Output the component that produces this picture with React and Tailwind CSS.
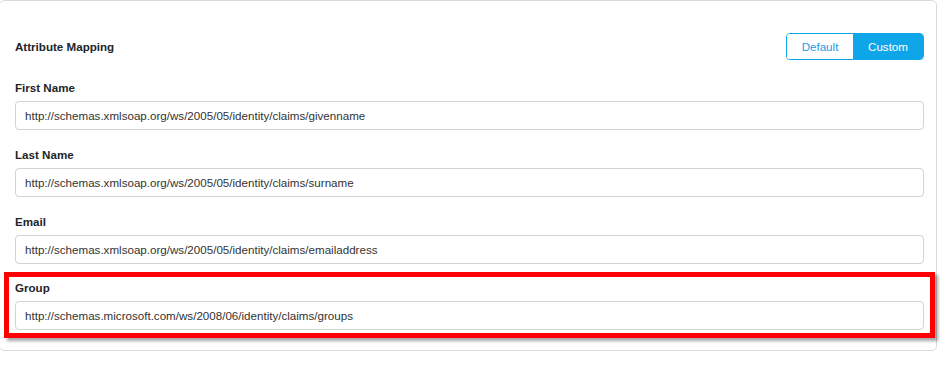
import React from "react";

const fields = [
  { label: "First Name", value: "http://schemas.xmlsoap.org/ws/2005/05/identity/claims/givenname", gap: "mt-[20px]" },
  { label: "Last Name", value: "http://schemas.xmlsoap.org/ws/2005/05/identity/claims/surname", gap: "mt-[17px]" },
  { label: "Email", value: "http://schemas.xmlsoap.org/ws/2005/05/identity/claims/emailaddress", gap: "mt-[17px]" },
  { label: "Group", value: "http://schemas.microsoft.com/ws/2008/06/identity/claims/groups", gap: "mt-[16px]" },
];

function App() {
  return (
    <div className="relative h-[373px] w-[951px] overflow-hidden bg-white font-['Liberation_Sans',Arial,sans-serif]">
      {/* card */}
      <div className="-ml-px w-[938px] rounded-[5px] border border-[#d6d9dd] bg-white pl-[15px] pr-[12px] pt-[32px] pb-[20px]">
        <div className="flex h-[27px] items-center justify-between">
          <span className="text-[11.6px] font-bold leading-4 text-[#212529]">Attribute Mapping</span>
          <div className="flex h-[27px] overflow-hidden rounded-[4px] border border-[#0ea5e9] text-[11.6px]">
            <button className="w-[66px] bg-white text-[#1d9be6]">Default</button>
            <button className="w-[70px] bg-[#0ea5e9] text-white">Custom</button>
          </div>
        </div>

        {fields.map((f) => (
          <div key={f.label} className={f.gap}>
            <div className="text-[11.6px] font-bold leading-4 text-[#212529]">{f.label}</div>
            <div className="mt-[5px] flex h-[29px] items-center rounded-[4px] border border-[#ced4da] px-[9px] text-[11.6px] text-[#333]">
              {f.value}
            </div>
          </div>
        ))}
      </div>

      {/* annotation highlight */}
      <div className="absolute left-[4px] top-[272px] h-[66px] w-[931px] border-[5px] border-[#ff0000] shadow-[3px_3px_3px_rgba(0,0,0,0.35)]" />
    </div>
  );
}

export default App;
